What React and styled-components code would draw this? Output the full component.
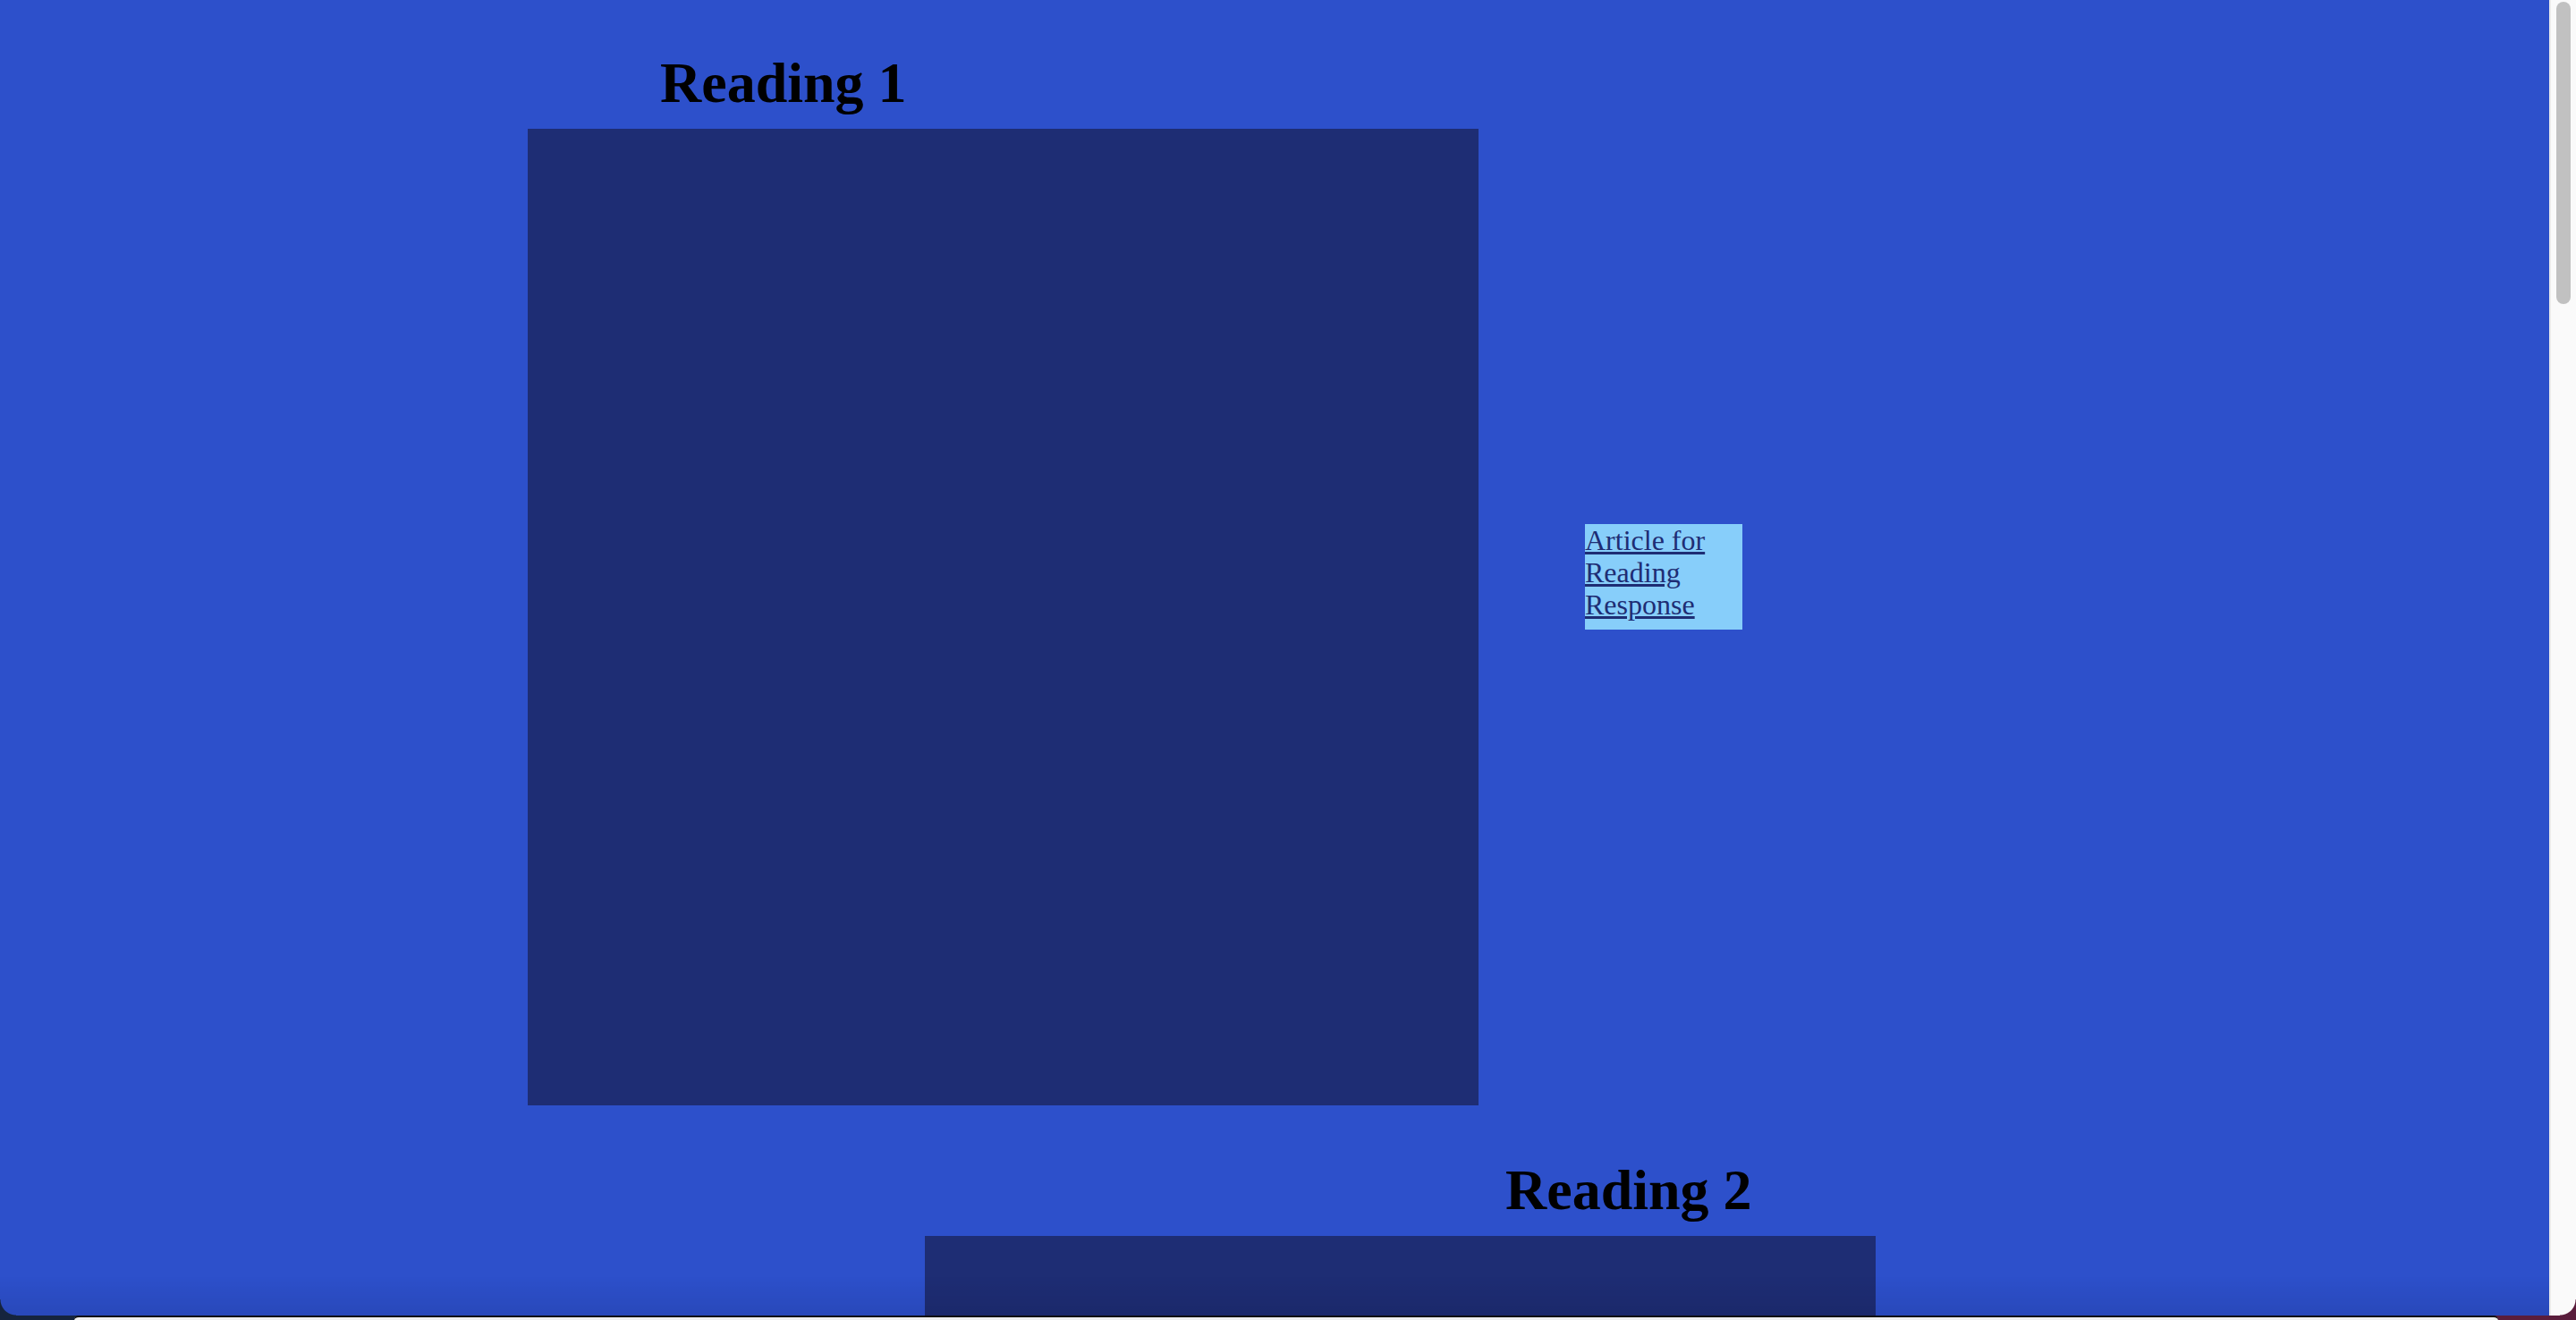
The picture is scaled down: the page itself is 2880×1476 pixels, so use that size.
import styled, { createGlobalStyle } from 'styled-components';

const GlobalStyle = createGlobalStyle`
  html, body {
    margin: 0;
    padding: 0;
    background: #2d50cb;
  }
  body {
    font-family: "Liberation Serif", "Times New Roman", serif;
  }
`;

const Page = styled.main`
  box-sizing: border-box;
  padding: 56px 30px 0 0;
`;

const Section = styled.section`
  display: flex;
  flex-direction: column;
  align-items: flex-start;
  margin-bottom: 58px;
`;

const Heading = styled.h1`
  margin: 0 0 14px ${(p) => p.$offset}px;
  font-size: 64px;
  line-height: 74px;
  font-weight: bold;
  color: #000;
`;

const Row = styled.div`
  display: flex;
  align-items: flex-start;
  margin-left: ${(p) => p.$offset}px;
`;

const Frame = styled.div`
  width: 1063px;
  height: 1092px;
  background: #1e2d74;
`;

const ArticleLink = styled.a`
  display: block;
  box-sizing: border-box;
  width: 176px;
  height: 118px;
  margin: 442px 0 0 119px;
  background: #87cefa;
  color: #1e2d74;
  font-size: 32px;
  line-height: 36px;
  text-decoration: underline;
`;

const ScrollTrack = styled.div`
  position: fixed;
  top: 0;
  right: 0;
  bottom: 0;
  width: 30px;
  box-sizing: border-box;
  border-left: 2px solid #ebebeb;
  background: #fafafa;
  pointer-events: none;
`;

const ScrollThumb = styled.div`
  margin: 2px 6px 0 6px;
  height: 338px;
  border-radius: 8px;
  background: #c1c1c1;
`;

const BottomShade = styled.div`
  position: fixed;
  left: 0;
  right: 30px;
  bottom: 5px;
  height: 44px;
  pointer-events: none;
  background: linear-gradient(to bottom, rgba(0, 0, 20, 0), rgba(0, 0, 20, 0.09));
`;

const Corner = styled.div`
  position: fixed;
  bottom: 5px;
  ${(p) => (p.$side === 'left' ? 'left: 0;' : 'right: 0;')}
  width: 18px;
  height: 18px;
  pointer-events: none;
  background: radial-gradient(
    circle at ${(p) => (p.$side === 'left' ? 'top right' : 'top left')},
    transparent 17px,
    ${(p) => p.$color} 18px
  );
`;

const Desktop = styled.div`
  position: fixed;
  left: 0;
  right: 0;
  bottom: 0;
  height: 5px;
  display: flex;
  pointer-events: none;
  background: linear-gradient(to right, #15243e 0 50%, #5a1d3c 50% 100%);
`;

const NextWindow = styled.div`
  flex: 1;
  margin: 0 87px 0 83px;
  box-sizing: border-box;
  border-top: 2px solid #111;
  border-radius: 6px 6px 0 0;
  background: #efefef;
`;

const readings = [
  { title: 'Reading 1', headingOffset: 738, rowOffset: 590, link: true },
  { title: 'Reading 2', headingOffset: 1683, rowOffset: 1034, link: false },
];

export default function App() {
  return (
    <>
      <GlobalStyle />
      <Page>
        {readings.map((r) => (
          <Section key={r.title}>
            <Heading $offset={r.headingOffset}>{r.title}</Heading>
            <Row $offset={r.rowOffset}>
              <Frame />
              {r.link && <ArticleLink href="#">Article for Reading Response</ArticleLink>}
            </Row>
          </Section>
        ))}
      </Page>
      <ScrollTrack>
        <ScrollThumb />
      </ScrollTrack>
      <BottomShade />
      <Corner $side="left" $color="#15243e" />
      <Corner $side="right" $color="#5a1d3c" />
      <Desktop>
        <NextWindow />
      </Desktop>
    </>
  );
}
